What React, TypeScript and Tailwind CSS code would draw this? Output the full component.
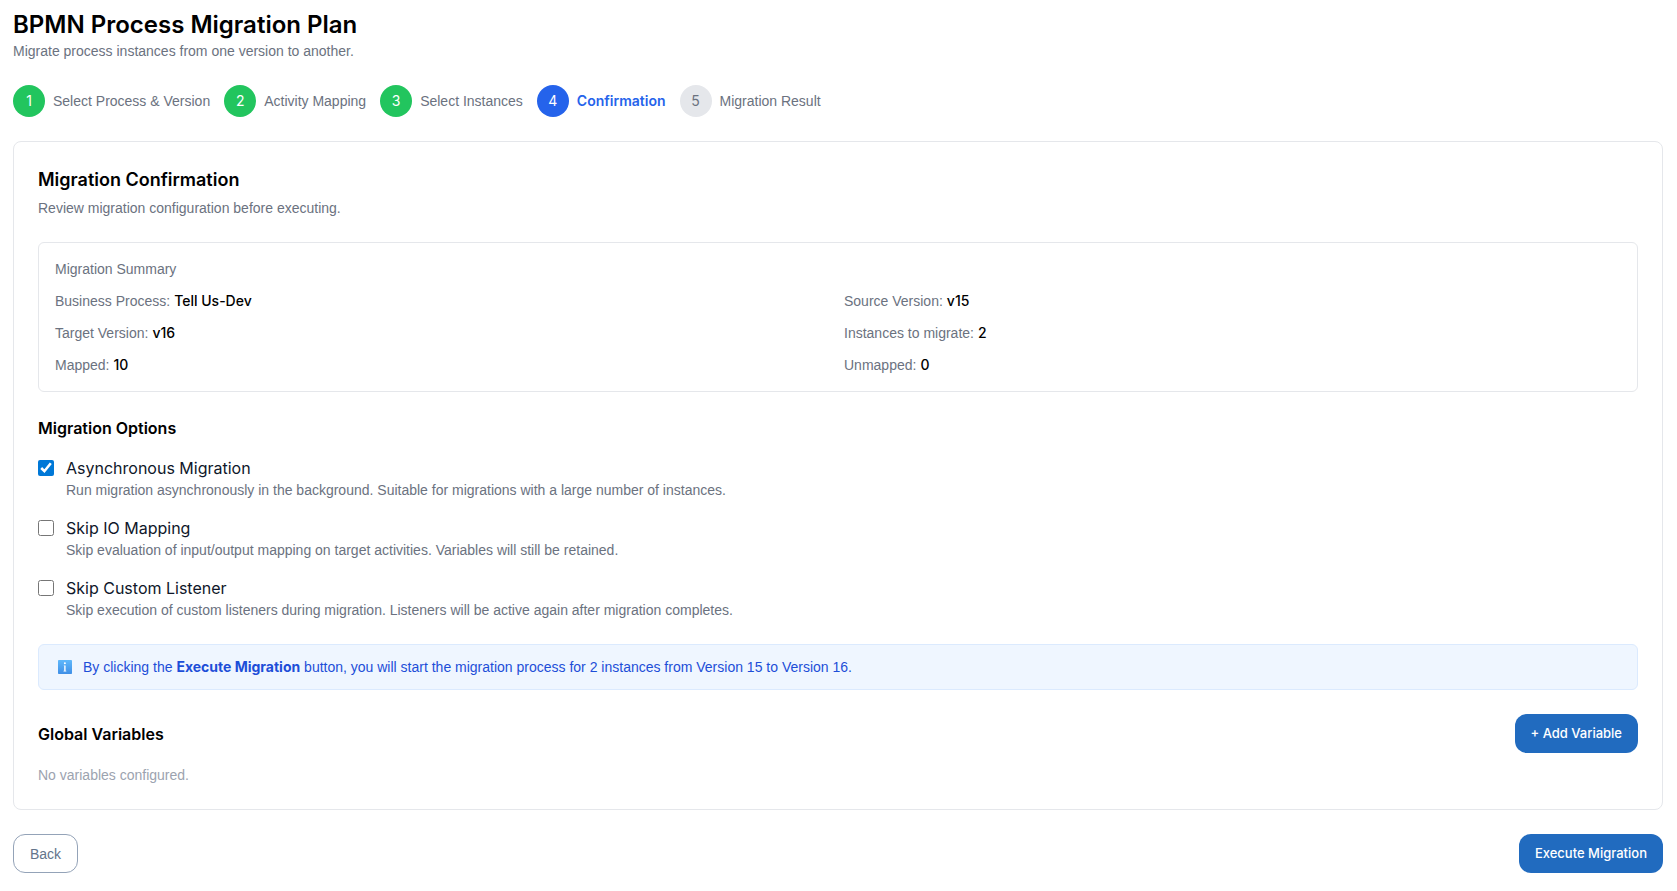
import React, { useState } from "react";

const steps = [
  "Select Process & Version",
  "Activity Mapping",
  "Select Instances",
  "Confirmation",
  "Migration Result",
];
const currentStep = 3;

const summary = [
  ["Business Process:", "Tell Us-Dev"],
  ["Source Version:", "v15"],
  ["Target Version:", "v16"],
  ["Instances to migrate:", "2"],
  ["Mapped:", "10"],
  ["Unmapped:", "0"],
];

const options = [
  {
    id: "async",
    label: "Asynchronous Migration",
    hint: "Run migration asynchronously in the background. Suitable for migrations with a large number of instances.",
  },
  {
    id: "skip-io",
    label: "Skip IO Mapping",
    hint: "Skip evaluation of input/output mapping on target activities. Variables will still be retained.",
  },
  {
    id: "skip-listener",
    label: "Skip Custom Listener",
    hint: "Skip execution of custom listeners during migration. Listeners will be active again after migration completes.",
  },
];

const display = "font-['Inter',sans-serif]";

function Stepper() {
  return (
    <ol className="mt-6 flex flex-wrap items-center gap-3.5">
      {steps.map((name, i) => {
        const circle =
          i < currentStep
            ? "bg-[#22c55e] text-white"
            : i === currentStep
              ? "bg-[#2563eb] text-white"
              : "bg-[#e5e7eb] text-[#6b7280]";
        return (
          <li
            key={name}
            aria-current={i === currentStep ? "step" : undefined}
            className="flex items-center gap-2"
          >
            <span
              className={`flex size-8 items-center justify-center rounded-full ${display} ${circle}`}
            >
              {i + 1}
            </span>
            <span
              className={
                i === currentStep
                  ? `font-semibold text-[#2563eb] ${display}`
                  : "text-[#6b7280]"
              }
            >
              {name}
            </span>
          </li>
        );
      })}
    </ol>
  );
}

function InfoIcon() {
  return (
    <svg viewBox="0 0 14 14" className="size-3.5 shrink-0" aria-hidden="true">
      <defs>
        <linearGradient id="info-fill" x1="0" y1="0" x2="0" y2="1">
          <stop offset="0" stopColor="#5fb8fb" />
          <stop offset="1" stopColor="#3f8fe6" />
        </linearGradient>
      </defs>
      <rect width="14" height="14" rx="0.8" fill="url(#info-fill)" />
      <circle cx="6.9" cy="3.3" r="1" fill="#fff" />
      <path d="M5.8 5.4H7.6V10.7H8.3V11.4H5.5V10.7H6.2V6.1H5.8Z" fill="#fff" />
    </svg>
  );
}

export default function App() {
  const [checked, setChecked] = useState<Record<string, boolean>>({ async: true });

  return (
    <main className="bg-white py-[13px] pr-3.5 pl-[13px] font-['Liberation_Sans',Arial,sans-serif] text-sm text-black">
      <h1 className={`text-2xl leading-6 font-semibold ${display}`}>
        BPMN Process Migration Plan
      </h1>
      <p className="mt-1 text-[#6b7280]">
        Migrate process instances from one version to another.
      </p>

      <Stepper />

      <section className="mt-6 rounded-lg border border-[#e5e7eb] p-6">
        <h2 className={`text-lg leading-7 font-semibold ${display}`}>Migration Confirmation</h2>
        <p className="mt-1 text-[#6b7280]">
          Review migration configuration before executing.
        </p>

        <div className="mt-6 rounded-md border border-[#e5e7eb] p-4">
          <h3 className="text-[#6b7280]">Migration Summary</h3>
          <dl className="mt-3 grid grid-cols-2 gap-3">
            {summary.map(([term, value]) => (
              <div key={term} className="flex gap-1">
                <dt className="text-[#6b7280]">{term}</dt>
                <dd className={`font-medium ${display}`}>{value}</dd>
              </div>
            ))}
          </dl>
        </div>

        <h3 className={`mt-6 text-base font-semibold ${display}`}>Migration Options</h3>
        <div className="mt-4 flex flex-col gap-4">
          {options.map(({ id, label, hint }) => (
            <div key={id} className="flex items-start gap-3">
              <input
                id={id}
                type="checkbox"
                checked={!!checked[id]}
                onChange={(e) => setChecked({ ...checked, [id]: e.target.checked })}
                aria-describedby={`${id}-hint`}
                className="mt-1 size-4 accent-[#0078d7]"
              />
              <div>
                <label
                  htmlFor={id}
                  className={`block text-base text-[#0f172a] ${display}`}
                >
                  {label}
                </label>
                <p id={`${id}-hint`} className="text-[#6b7280]">
                  {hint}
                </p>
              </div>
            </div>
          ))}
        </div>

        <div className="mt-6 flex items-center gap-[11px] rounded-md border border-[#dbeafe] bg-[#eff6ff] px-[19px] py-3 text-[#1d4ed8]">
          <InfoIcon />
          <p>
            By clicking the{" "}
            <strong className={`font-bold ${display}`}>Execute Migration</strong> button, you
            will start the migration process for 2 instances from Version 15 to Version 16.
          </p>
        </div>

        <div className="mt-6 flex items-center justify-between">
          <h3 className={`text-base font-semibold ${display}`}>Global Variables</h3>
          <button
            type="button"
            className={`h-[39px] rounded-xl bg-[#216bbf] px-4 text-[13px] font-medium text-white ${display}`}
          >
            + Add Variable
          </button>
        </div>
        <p className="mt-3 text-[#9ca3af]">No variables configured.</p>
      </section>

      <div className="mt-6 flex justify-between">
        <button
          type="button"
          className="h-[39px] rounded-xl border border-[#94a3b8] px-4 text-[#64748b]"
        >
          Back
        </button>
        <button
          type="button"
          className={`h-[39px] rounded-xl bg-[#216bbf] px-4 text-[13px] font-medium text-white ${display}`}
        >
          Execute Migration
        </button>
      </div>
    </main>
  );
}
